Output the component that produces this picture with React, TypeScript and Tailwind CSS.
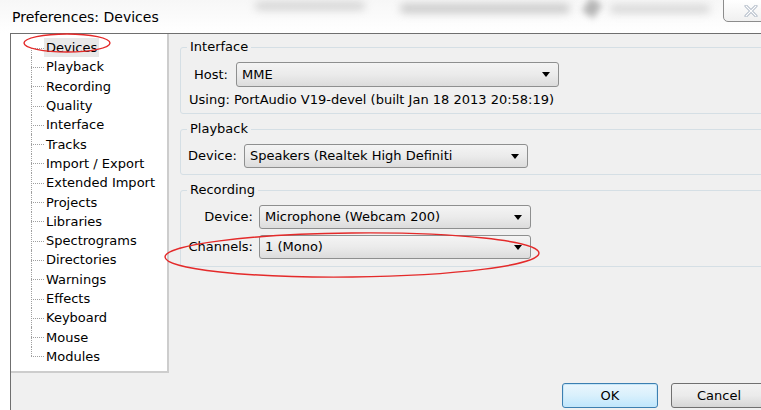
import type { ReactNode } from "react";

const pages = [
  "Devices",
  "Playback",
  "Recording",
  "Quality",
  "Interface",
  "Tracks",
  "Import / Export",
  "Extended Import",
  "Projects",
  "Libraries",
  "Spectrograms",
  "Directories",
  "Warnings",
  "Effects",
  "Keyboard",
  "Mouse",
  "Modules",
];

function Arrow() {
  return (
    <svg width="8" height="5" viewBox="0 0 8 5" className="shrink-0">
      <path d="M0 0h8L4 5z" fill="#000" />
    </svg>
  );
}

function Combo({ value, className }: { value: string; className: string }) {
  return (
    <div
      className={`${className} flex items-center justify-between rounded-[3px] border border-[#8e8f8f] bg-linear-to-b from-[#f4f4f4] via-[#ebebeb] to-[#dcdcdc] pl-[5px] pr-[8px]`}
    >
      <span className="whitespace-nowrap">{value}</span>
      <Arrow />
    </div>
  );
}

function Group({ title, className, children }: { title: string; className: string; children: ReactNode }) {
  return (
    <fieldset className={`${className} w-[620px] rounded-[3px] border border-[#d5dfe5]`}>
      <legend className="ml-[6px] px-[3px] h-[16px] leading-[16px]">{title}</legend>
      {children}
    </fieldset>
  );
}

function TreeRow({ label, index, last }: { label: string; index: number; last: boolean }) {
  const selected = index === 0;
  return (
    <div className="h-[19.3px] flex items-center pl-[20px]">
      <span className="relative w-[13px] h-full shrink-0">
        <span
          className={`absolute left-0 border-l border-dotted border-[#a0a0a0] ${
            index === 0 ? "top-1/2 bottom-0" : last ? "top-0 h-1/2" : "top-0 bottom-0"
          }`}
        />
        <span className="absolute left-0 right-0 top-1/2 border-t border-dotted border-[#a0a0a0]" />
      </span>
      <span className={`px-[2px] leading-[19px] whitespace-nowrap ${selected ? "bg-[#e8e8e8]" : ""}`}>{label}</span>
    </div>
  );
}

export default function App() {
  return (
    <div
      className="relative w-[761px] h-[410px] overflow-hidden bg-white text-[13px] text-black"
      style={{ fontFamily: '"DejaVu Sans", Tahoma, sans-serif' }}
    >
      {/* title bar with the blurred glass behind it */}
      <div className="relative h-[33px] bg-linear-to-b from-[#f7f7f7] to-white">
        <div className="absolute left-[255px] top-[2px] w-[110px] h-[8px] rounded-full bg-[#b8b8b8] blur-[4px] opacity-60" />
        <div className="absolute left-[400px] top-[4px] w-[170px] h-[9px] rounded-full bg-[#a8a8a8] blur-[4px] opacity-60" />
        <div className="absolute left-[585px] top-[0px] w-[14px] h-[16px] rotate-[35deg] bg-[#8a8a8a] blur-[3px] opacity-60" />
        <div className="absolute left-[610px] top-[5px] w-[100px] h-[8px] rounded-full bg-[#b0b0b0] blur-[4px] opacity-50" />
        <div className="absolute right-[-4px] top-[-1px] w-[42px] h-[23px] rounded-bl-[5px] border border-[#8c8c8c] bg-linear-to-b from-white to-[#f0f0f0] flex items-center pl-[20px]">
          <svg width="14" height="12" viewBox="0 0 14 12">
            <path d="M2 1l10 10M12 1L2 11" stroke="#a9b4c2" strokeWidth="3" strokeLinecap="round" />
            <path d="M2 1l10 10M12 1L2 11" stroke="#fff" strokeWidth="1.2" strokeLinecap="round" />
          </svg>
        </div>
        <div className="pl-[12px] pt-[9px] leading-[16px] text-[14px]">Preferences: Devices</div>
      </div>

      {/* dialog body */}
      <div className="ml-[10px] w-[770px] h-[377px] border-l border-t border-[#6f6f6f] bg-[#f0f0f0] flex flex-col">
        <div className="flex">
          <div className="w-[158px] h-[339px] shrink-0 bg-white border-r-2 border-b-2 border-[#cdcdcd] pt-[4px]">
            {pages.map((p, i) => (
              <TreeRow key={p} label={p} index={i} last={i === pages.length - 1} />
            ))}
          </div>

          <div className="ml-[11px] flex flex-col">
            <Group title="Interface" className="mt-[5px] pb-[5px]">
              <div className="mt-[7px] flex items-center pl-[13px] gap-[5px]">
                <span className="w-[37px] shrink-0 whitespace-nowrap">Host:</span>
                <Combo value="MME" className="w-[323px] h-[25px]" />
              </div>
              <div className="mt-[5px] pl-[8px] leading-[16px] whitespace-nowrap">
                Using: PortAudio V19-devel (built Jan 18 2013 20:58:19)
              </div>
            </Group>

            <Group title="Playback" className="mt-[7px] pb-[6px]">
              <div className="mt-[7px] flex items-center pl-[7px] gap-[4px]">
                <span className="w-[52px] shrink-0 whitespace-nowrap">Device:</span>
                <Combo value="Speakers (Realtek High Definiti" className="w-[284px] h-[24px]" />
              </div>
            </Group>

            <Group title="Recording" className="mt-[7px] pb-[7px]">
              <div className="mt-[7px] pl-[7px] grid grid-cols-[65px_272px] gap-x-[6px] gap-y-[6px] items-center">
                <span className="text-right whitespace-nowrap">Device:</span>
                <Combo value="Microphone (Webcam 200)" className="h-[24px]" />
                <span className="text-right whitespace-nowrap">Channels:</span>
                <Combo value="1 (Mono)" className="h-[24px]" />
              </div>
            </Group>
          </div>
        </div>

        <div className="mt-[10px] flex justify-end gap-[13px] pr-[13px]">
          <button className="w-[96px] h-[25px] rounded-[3px] border border-[#3c7fb1] bg-linear-to-b from-[#eaf6fd] via-[#d9f0fc] to-[#bee6fd] shadow-[inset_0_0_0_1px_#c6e6f8]">
            OK
          </button>
          <button className="w-[96px] h-[25px] rounded-[3px] border border-[#707070] bg-linear-to-b from-[#f2f2f2] via-[#ebebeb] to-[#d6d6d6]">
            Cancel
          </button>
        </div>
      </div>

      {/* red hand-drawn marks */}
      <svg className="absolute inset-0 pointer-events-none" width="761" height="410">
        <ellipse cx="67" cy="43" rx="43" ry="9" fill="none" stroke="#e42a2a" strokeWidth="1.4" />
        <ellipse cx="352" cy="255" rx="187" ry="22" fill="none" stroke="#e42a2a" strokeWidth="1.4" transform="rotate(-0.6 352 255)" />
      </svg>
    </div>
  );
}
